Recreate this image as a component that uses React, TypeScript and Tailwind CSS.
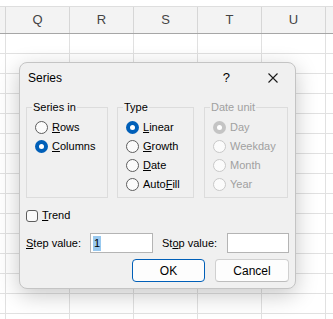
import type { ReactNode } from "react";

const cols = ["Q", "R", "S", "T", "U"];

function Radio({ checked, disabled }: { checked?: boolean; disabled?: boolean }) {
  if (checked) {
    return (
      <span
        className={`w-[13px] h-[13px] rounded-full flex items-center justify-center shrink-0 ${
          disabled ? "bg-[#c4c4c4]" : "bg-[#005fb8]"
        }`}
      >
        <span className="w-[5px] h-[5px] rounded-full bg-white" />
      </span>
    );
  }
  return (
    <span
      className={`w-[13px] h-[13px] rounded-full border shrink-0 ${
        disabled ? "border-[#c8c8c8] bg-[#fbfbfb]" : "border-[#5d5d5d] bg-[#fbfbfb]"
      }`}
    />
  );
}

function Option({
  children,
  checked,
  disabled,
}: {
  children: ReactNode;
  checked?: boolean;
  disabled?: boolean;
}) {
  return (
    <div className="h-[19px] flex items-center gap-[4px] pl-[8px]">
      <Radio checked={checked} disabled={disabled} />
      <span className={disabled ? "text-[#a0a0a0]" : "text-black"}>{children}</span>
    </div>
  );
}

function Group({ title, width, disabled, children }: { title: string; width: string; disabled?: boolean; children: ReactNode }) {
  return (
    <fieldset className={`${width} h-[98px] border border-[#dcdcdc] pt-[4px]`}>
      <legend className={`ml-[5px] px-[1px] leading-[14px] ${disabled ? "text-[#a0a0a0]" : "text-black"}`}>
        {title}
      </legend>
      {children}
    </fieldset>
  );
}

export default function App() {
  return (
    <div className="relative w-[333px] h-[319px] overflow-hidden bg-white font-['Liberation_Sans',Arial,sans-serif]">
      {/* ── Sheet ── */}
      <div className="h-[7px] border-b border-[#dedede]" />
      <div className="h-[27px] flex bg-[#f3f3f3] border-b border-[#a6a6a6] text-[13px] text-[#444]">
        <div className="w-[6px] border-r border-[#d6d6d6]" />
        {cols.map((c) => (
          <div key={c} className="w-[64px] border-r border-[#d6d6d6] flex items-center justify-center">
            {c}
          </div>
        ))}
        <div className="flex-1" />
      </div>
      {Array.from({ length: 15 }).map((_, i) => (
        <div key={i} className="h-[20px] flex border-b border-[#e1e1e1]">
          <div className="w-[6px] border-r border-[#e1e1e1]" />
          {cols.map((c) => (
            <div key={c} className="w-[64px] border-r border-[#e1e1e1]" />
          ))}
        </div>
      ))}

      {/* ── Series dialog ── */}
      <div className="absolute left-[19px] top-[62px] w-[277px] h-[227px] rounded-[8px] border border-[#c4c4c4] bg-[#f0f0f0] shadow-[0_6px_22px_rgba(0,0,0,0.22)] text-[11px] text-black flex flex-col">
        <div className="h-[30px] flex items-center pl-[8px] pr-[17px] text-[12px]">
          <span>Series</span>
          <span className="ml-auto mr-[38px] text-[13px]">?</span>
          <svg width="10" height="10" viewBox="0 0 10 10" className="shrink-0">
            <path d="M0.5 0.5L9.5 9.5M9.5 0.5L0.5 9.5" stroke="#1a1a1a" strokeWidth="1.1" />
          </svg>
        </div>

        <div className="mt-[7px] flex pl-[6px]">
          <Group title="Series in" width="w-[82px]">
            <Option>
              <span className="underline">R</span>ows
            </Option>
            <Option checked>
              <span className="underline">C</span>olumns
            </Option>
          </Group>
          <div className="w-[9px]" />
          <Group title="Type" width="w-[77px]">
            <Option checked>
              <span className="underline">L</span>inear
            </Option>
            <Option>
              <span className="underline">G</span>rowth
            </Option>
            <Option>
              <span className="underline">D</span>ate
            </Option>
            <Option>
              Auto<span className="underline">F</span>ill
            </Option>
          </Group>
          <div className="w-[10px]" />
          <Group title="Date unit" width="w-[84px]" disabled>
            <Option checked disabled>Day</Option>
            <Option disabled>Weekday</Option>
            <Option disabled>Month</Option>
            <Option disabled>Year</Option>
          </Group>
        </div>

        <div className="mt-[8px] h-[19px] flex items-center gap-[4px] pl-[6px]">
          <span className="w-[12px] h-[12px] rounded-[3px] border border-[#5d5d5d] bg-[#fbfbfb]" />
          <span>
            <span className="underline">T</span>rend
          </span>
        </div>

        <div className="mt-[8px] h-[20px] flex items-center pl-[6px]">
          <span className="w-[64px]">
            <span className="underline">S</span>tep value:
          </span>
          <div className="w-[63px] h-[20px] border border-[#b4b4b4] bg-white flex items-center pl-[2px]">
            <span className="bg-[#99c9ef] px-[1px] leading-[15px]">1</span>
          </div>
          <span className="w-[65px] ml-[9px]">
            St<span className="underline">o</span>p value:
          </span>
          <div className="w-[62px] h-[20px] border border-[#b4b4b4] bg-white" />
        </div>

        <div className="mt-[6px] flex justify-end gap-[10px] pr-[6px]">
          <button className="w-[73px] h-[23px] rounded-[4px] border border-[#005fb8] bg-[#fdfdfd] text-[12px]">
            OK
          </button>
          <button className="w-[74px] h-[23px] rounded-[4px] border border-[#d0d0d0] border-b-[#bdbdbd] bg-[#fdfdfd] text-[12px]">
            Cancel
          </button>
        </div>
      </div>
    </div>
  );
}
